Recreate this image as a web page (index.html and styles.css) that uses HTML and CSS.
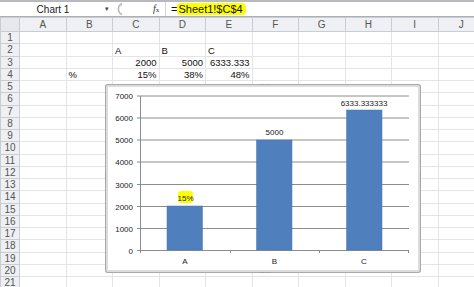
FILE: index.html
```html
<!DOCTYPE html>
<html>
    <head>
        <link rel="stylesheet" href="styles.css">
    </head>
    <body>
    <div class="app">
        <div class="formulabar">
            <div class="namebox">Chart 1</div>
            <div class="namearrow">&#9662;</div>
            <div class="expand">
                <svg width="14" height="14" viewBox="0 0 14 14"><path d="M9 1.5 A6 6 0 0 0 9 12.5" fill="none" stroke="#b9b9b9" stroke-width="1.6"/><path d="M7 4 A3 3 0 0 1 9 3.5" fill="none" stroke="#cfcfcf" stroke-width="1"/></svg>
            </div>
            <div class="fx"><i>f</i><span>x</span></div>
            <div class="formula">=<mark>Sheet1!$C$4</mark></div>
        </div>

        <table class="sheet">
            <colgroup>
                <col class="rowhead">
                <col><col><col><col><col><col><col><col><col><col>
            </colgroup>
            <thead>
                <tr><th class="corner"></th><th>A</th><th>B</th><th>C</th><th>D</th><th>E</th><th>F</th><th>G</th><th>H</th><th>I</th><th>J</th></tr>
            </thead>
            <tbody>
                <tr><th>1</th><td></td><td></td><td></td><td></td><td></td><td></td><td></td><td></td><td></td><td></td></tr>
                <tr><th>2</th><td></td><td></td><td>A</td><td>B</td><td>C</td><td></td><td></td><td></td><td></td><td></td></tr>
                <tr><th>3</th><td></td><td></td><td class="num">2000</td><td class="num">5000</td><td class="num">6333.333</td><td></td><td></td><td></td><td></td><td></td></tr>
                <tr><th>4</th><td></td><td>%</td><td class="num">15%</td><td class="num">38%</td><td class="num">48%</td><td></td><td></td><td></td><td></td><td></td></tr>
                <tr><th>5</th><td></td><td></td><td></td><td></td><td></td><td></td><td></td><td></td><td></td><td></td></tr>
                <tr><th>6</th><td></td><td></td><td></td><td></td><td></td><td></td><td></td><td></td><td></td><td></td></tr>
                <tr><th>7</th><td></td><td></td><td></td><td></td><td></td><td></td><td></td><td></td><td></td><td></td></tr>
                <tr><th>8</th><td></td><td></td><td></td><td></td><td></td><td></td><td></td><td></td><td></td><td></td></tr>
                <tr><th>9</th><td></td><td></td><td></td><td></td><td></td><td></td><td></td><td></td><td></td><td></td></tr>
                <tr><th>10</th><td></td><td></td><td></td><td></td><td></td><td></td><td></td><td></td><td></td><td></td></tr>
                <tr><th>11</th><td></td><td></td><td></td><td></td><td></td><td></td><td></td><td></td><td></td><td></td></tr>
                <tr><th>12</th><td></td><td></td><td></td><td></td><td></td><td></td><td></td><td></td><td></td><td></td></tr>
                <tr><th>13</th><td></td><td></td><td></td><td></td><td></td><td></td><td></td><td></td><td></td><td></td></tr>
                <tr><th>14</th><td></td><td></td><td></td><td></td><td></td><td></td><td></td><td></td><td></td><td></td></tr>
                <tr><th>15</th><td></td><td></td><td></td><td></td><td></td><td></td><td></td><td></td><td></td><td></td></tr>
                <tr><th>16</th><td></td><td></td><td></td><td></td><td></td><td></td><td></td><td></td><td></td><td></td></tr>
                <tr><th>17</th><td></td><td></td><td></td><td></td><td></td><td></td><td></td><td></td><td></td><td></td></tr>
                <tr><th>18</th><td></td><td></td><td></td><td></td><td></td><td></td><td></td><td></td><td></td><td></td></tr>
                <tr><th>19</th><td></td><td></td><td></td><td></td><td></td><td></td><td></td><td></td><td></td><td></td></tr>
                <tr><th>20</th><td></td><td></td><td></td><td></td><td></td><td></td><td></td><td></td><td></td><td></td></tr>
                <tr><th>21</th><td></td><td></td><td></td><td></td><td></td><td></td><td></td><td></td><td></td><td></td></tr>
            </tbody>
        </table>

        <div class="chart">
            <svg class="plot" width="316" height="189" viewBox="105 84 316 189">
                <g class="grid">
                    <line x1="137" y1="96" x2="409" y2="96"/>
                    <line x1="137" y1="118" x2="409" y2="118"/>
                    <line x1="137" y1="140" x2="409" y2="140"/>
                    <line x1="137" y1="162" x2="409" y2="162"/>
                    <line x1="137" y1="184.5" x2="409" y2="184.5"/>
                    <line x1="137" y1="206.5" x2="409" y2="206.5"/>
                    <line x1="137" y1="228.5" x2="409" y2="228.5"/>
                </g>
                <g class="axis">
                    <line x1="140.5" y1="96" x2="140.5" y2="253"/>
                    <line x1="137" y1="250.5" x2="409" y2="250.5"/>
                    <line x1="230.5" y1="250" x2="230.5" y2="253"/>
                    <line x1="319.5" y1="250" x2="319.5" y2="253"/>
                    <line x1="408.5" y1="250" x2="408.5" y2="253"/>
                </g>
                <g class="ylabels">
                    <text x="133" y="99">7000</text>
                    <text x="133" y="121">6000</text>
                    <text x="133" y="143">5000</text>
                    <text x="133" y="165">4000</text>
                    <text x="133" y="187.5">3000</text>
                    <text x="133" y="209.5">2000</text>
                    <text x="133" y="231.5">1000</text>
                    <text x="133" y="253.5">0</text>
                </g>
                <g class="bars">
                    <rect x="167" y="206" width="35.5" height="44"/>
                    <rect x="256.5" y="140" width="35.5" height="110"/>
                    <rect x="346.5" y="110" width="35.5" height="140"/>
                </g>
                <rect class="hl" x="178" y="191" width="15" height="12" rx="3"/>
                <g class="labels">
                    <text x="185.5" y="200.5">15%</text>
                    <text x="274.5" y="135">5000</text>
                    <text x="364" y="105.5">6333.333333</text>
                    <text x="185" y="264">A</text>
                    <text x="274.5" y="264">B</text>
                    <text x="364" y="264">C</text>
                </g>
            </svg>
            <span class="handle top"></span>
            <span class="handle bottom"></span>
            <span class="handle left"></span>
            <span class="handle right"></span>
        </div>
    </div>
    </body>
</html>
```

FILE: styles.css
```css
body {
    margin: 0;
    background-color: white;
    font-family: "Liberation Sans", Arial, sans-serif;
}
.app {
    position: relative;
    width: 474px;
    height: 287px;
    overflow: hidden;
}
.formulabar {
    display: flex;
    align-items: center;
    height: 14px;
    border-top: 2px solid #b7b9bd;
    border-bottom: 1px solid #a9b0b8;
    background-color: white;
    font-size: 11px;
}
.namebox {
    width: 104px;
    text-align: center;
    color: #222;
    font-size: 10px;
    padding-left: 1px;
}
.namearrow {
    width: 8px;
    font-size: 7px;
    color: #444;
}
.expand {
    display: flex;
    width: 40px;
    height: 14px;
}
.fx {
    width: 12px;
    font-family: "Liberation Serif", serif;
    font-size: 10px;
    color: #333;
    border-right: 1px solid #d6d6d6;
    height: 14px;
    line-height: 14px;
}
.fx span {
    font-size: 7px;
}
.formula {
    padding-left: 5px;
    color: #111;
    line-height: 14px;
}
.formula mark {
    background-color: #ffff00;
    color: #111;
    border-radius: 4px;
    padding: 0 3px 0 1px;
}
.sheet {
    border-collapse: collapse;
    table-layout: fixed;
    width: 484px;
    font-size: 9.5px;
}
.sheet col {
    width: 46.5px;
}
.sheet col.rowhead {
    width: 19px;
}
.sheet thead th {
    height: 13px;
    padding: 0;
    font-weight: normal;
    font-size: 10px;
    color: #555;
    background-color: #eef0f3;
    border: 1px solid #c9ccd1;
    line-height: 12px;
}
.sheet thead th.corner {
    background-color: #e6e8eb;
}
.sheet tbody tr {
    height: 12.25px;
}
.sheet tbody th {
    padding: 0;
    font-weight: normal;
    font-size: 10px;
    color: #555;
    background-color: #eef0f3;
    border: 1px solid #c9ccd1;
    text-align: center;
    line-height: 11px;
}
.sheet td {
    padding: 0 2px;
    border: 1px solid #e2e4e6;
    line-height: 11px;
    vertical-align: bottom;
    color: #111;
    white-space: nowrap;
    overflow: visible;
}
.sheet td.num {
    text-align: right;
}
.chart {
    position: absolute;
    left: 105px;
    top: 84px;
    width: 316px;
    height: 189px;
    background-color: white;
    border-radius: 3px;
    box-shadow: inset 0 0 0 1px #a9a9a9, inset 0 0 0 3px #dcdcdc;
}
.plot {
    display: block;
}
.grid line {
    stroke: #8c8c8c;
    stroke-width: 1;
}
.axis line {
    stroke: #8c8c8c;
    stroke-width: 1;
}
.ylabels text {
    text-anchor: end;
    font-size: 8px;
    fill: #222;
}
.labels text {
    text-anchor: middle;
    font-size: 8px;
    fill: #222;
}
.bars rect {
    fill: #4f7fbd;
    stroke: #4a76b0;
    stroke-width: 0.5;
}
.hl {
    fill: #ffff00;
}
.handle {
    position: absolute;
    border-color: #9a9a9a;
    border-style: dotted;
    border-width: 0;
}
.handle.top {
    top: 0;
    left: 155px;
    width: 10px;
    border-top-width: 1px;
}
.handle.bottom {
    bottom: 0;
    left: 155px;
    width: 10px;
    border-bottom-width: 1px;
}
.handle.left {
    left: 0;
    top: 88px;
    height: 10px;
    border-left-width: 1px;
}
.handle.right {
    right: 0;
    top: 88px;
    height: 10px;
    border-right-width: 1px;
}
```
